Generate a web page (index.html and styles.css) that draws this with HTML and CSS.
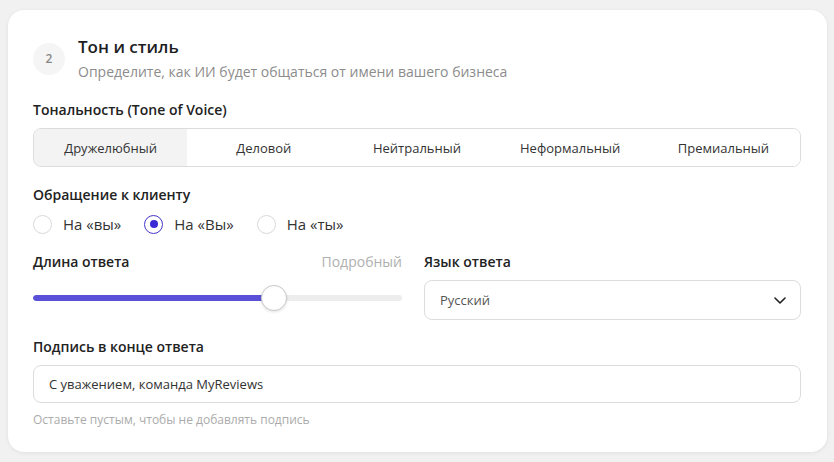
FILE: index.html
```html
<!DOCTYPE html>
<html lang="ru">
<head>
  <meta charset="UTF-8">
  <meta name="viewport" content="width=device-width, initial-scale=1.0">
  <title>Тон и стиль</title>
  <link rel="stylesheet" href="styles.css">
</head>
<body>
  <div class="card">
    <div class="step-header">
      <div class="step-num">2</div>
      <div>
        <h2 class="step-title">Тон и стиль</h2>
        <p class="step-desc">Определите, как ИИ будет общаться от имени вашего бизнеса</p>
      </div>
    </div>

    <div class="field">
      <div class="label">Тональность (Tone of Voice)</div>
      <div class="segmented">
        <button class="seg active">Дружелюбный</button>
        <button class="seg">Деловой</button>
        <button class="seg">Нейтральный</button>
        <button class="seg">Неформальный</button>
        <button class="seg">Премиальный</button>
      </div>
    </div>

    <div class="field">
      <div class="label label-tight">Обращение к клиенту</div>
      <div class="radios">
        <label class="radio"><span class="dot"></span>На «вы»</label>
        <label class="radio checked"><span class="dot"></span>На «Вы»</label>
        <label class="radio"><span class="dot"></span>На «ты»</label>
      </div>
    </div>

    <div class="field two-cols">
      <div>
        <div class="label-row">
          <span class="label">Длина ответа</span>
          <span class="hint-value">Подробный</span>
        </div>
        <div class="slider">
          <div class="track"><div class="fill" style="width: 65.3%;"></div></div>
          <div class="thumb" style="left: 65.3%;"></div>
        </div>
      </div>
      <div>
        <div class="label">Язык ответа</div>
        <div class="select">
          <span>Русский</span>
          <svg width="12" height="7" viewBox="0 0 12 7" fill="none">
            <path d="M1 1l5 5 5-5" stroke="#222" stroke-width="1.6" stroke-linecap="round" stroke-linejoin="round"/>
          </svg>
        </div>
      </div>
    </div>

    <div class="field last">
      <div class="label">Подпись в конце ответа</div>
      <div class="input">С уважением, команда MyReviews</div>
      <div class="help">Оставьте пустым, чтобы не добавлять подпись</div>
    </div>
  </div>
</body>
</html>
```

FILE: styles.css
```css
/* Base */
body {
  margin: 0;
  padding: 10px 7px 10px 8px;
  background: #f1f1f2;
  font-family: 'Open Sans', 'Noto Sans', sans-serif;
  color: #222;
}

.card {
  background: #fff;
  border-radius: 16px;
  padding: 25px 26px 23px 25px;
  box-shadow: 0 1px 4px rgba(0, 0, 0, 0.07);
}

/* Step header */
.step-header {
  display: flex;
  align-items: center;
  gap: 13px;
  margin-bottom: 18px;
}

.step-num {
  width: 32px;
  height: 32px;
  border-radius: 50%;
  background: #f5f5f6;
  color: #888;
  font-size: 12px;
  font-weight: 600;
  display: flex;
  align-items: center;
  justify-content: center;
  flex-shrink: 0;
}

.step-title {
  margin: 0;
  font-size: 17px;
  line-height: 24px;
  font-weight: 600;
  color: #1d1d1f;
}

.step-desc {
  margin: 3px 0 0;
  font-size: 14px;
  line-height: 20px;
  color: #8c8c8c;
}

/* Fields */
.field {
  margin-bottom: 18px;
}

.field.last {
  margin-bottom: 0;
}

.label {
  display: block;
  font-size: 14px;
  line-height: 20px;
  font-weight: 600;
  color: #222;
  margin-bottom: 8px;
}

.label-tight {
  margin-bottom: 9px;
}

/* Segmented control */
.segmented {
  display: grid;
  grid-template-columns: repeat(5, 1fr);
  border: 1px solid #dcdcde;
  border-radius: 8px;
  overflow: hidden;
  height: 39px;
  box-sizing: border-box;
}

.seg {
  border: none;
  background: #fff;
  font-family: inherit;
  font-size: 13px;
  font-weight: 500;
  color: #333;
  padding: 0;
  cursor: pointer;
}

.seg.active {
  background: #f3f3f4;
}

/* Radios */
.radios {
  display: flex;
  gap: 23px;
  height: 20px;
  align-items: center;
}

.radio {
  display: flex;
  align-items: center;
  gap: 11px;
  font-size: 15px;
  font-weight: 500;
  color: #333;
}

.dot {
  width: 19px;
  height: 19px;
  border-radius: 50%;
  border: 1px solid #d9d9db;
  box-sizing: border-box;
  display: flex;
  align-items: center;
  justify-content: center;
}

.radio.checked .dot {
  border: 1.5px solid #4435c9;
}

.radio.checked .dot::after {
  content: '';
  width: 8px;
  height: 8px;
  border-radius: 50%;
  background: #3a2bd4;
}

/* Two columns: slider + select */
.two-cols {
  display: grid;
  grid-template-columns: 369px 1fr;
  gap: 22px;
  margin-bottom: 17px;
}

.label-row {
  display: flex;
  justify-content: space-between;
  align-items: center;
  margin-bottom: 13px;
}

.label-row .label {
  margin-bottom: 0;
}

.hint-value {
  font-size: 14px;
  line-height: 20px;
  color: #b0b0b0;
}

.slider {
  position: relative;
  height: 26px;
  display: flex;
  align-items: center;
}

.track {
  width: 100%;
  height: 6px;
  border-radius: 3px;
  background: #ededee;
  overflow: hidden;
}

.fill {
  height: 100%;
  background: #5b50d8;
  border-radius: 3px;
}

.thumb {
  position: absolute;
  top: 0;
  width: 26px;
  height: 26px;
  margin-left: -13px;
  border-radius: 50%;
  background: #fff;
  border: 1px solid #c9c9cc;
  box-sizing: border-box;
  box-shadow: 0 1px 3px rgba(0, 0, 0, 0.12);
}

.select {
  height: 40px;
  box-sizing: border-box;
  border: 1px solid #dcdcde;
  border-radius: 8px;
  display: flex;
  align-items: center;
  justify-content: space-between;
  padding: 0 14px 0 15px;
  font-size: 13px;
  color: #555;
}

/* Signature input */
.input {
  height: 38px;
  box-sizing: border-box;
  border: 1px solid #dcdcde;
  border-radius: 8px;
  display: flex;
  align-items: center;
  padding: 0 15px;
  font-size: 13px;
  color: #333;
}

.help {
  margin-top: 8px;
  font-size: 12px;
  line-height: 18px;
  color: #ababab;
}
```
